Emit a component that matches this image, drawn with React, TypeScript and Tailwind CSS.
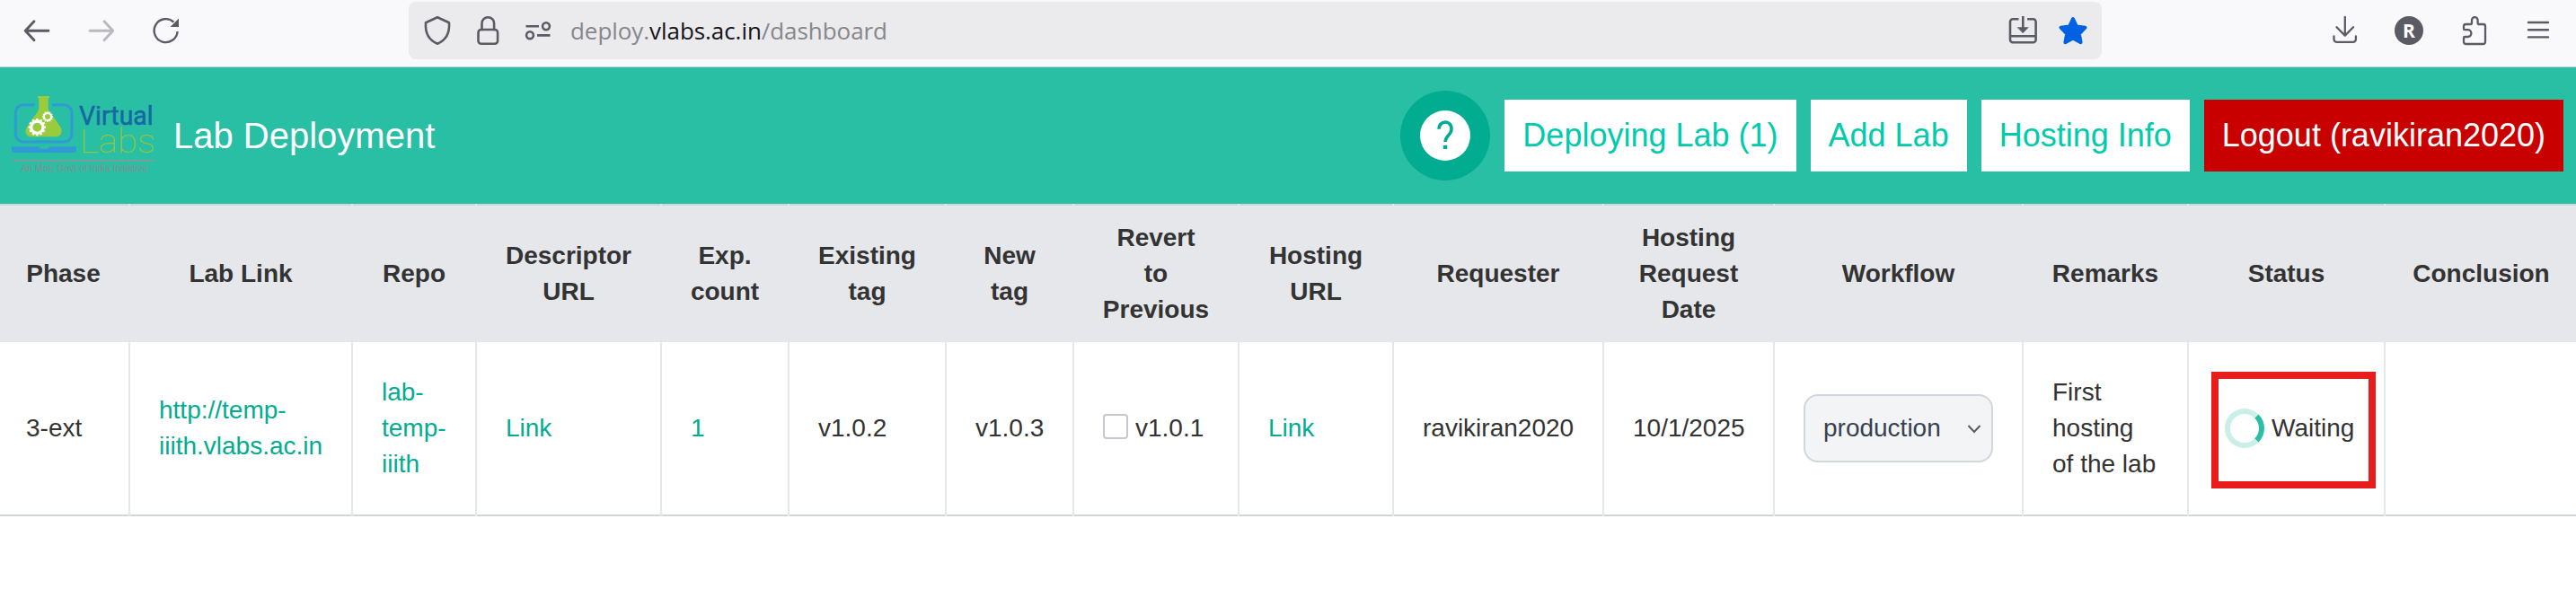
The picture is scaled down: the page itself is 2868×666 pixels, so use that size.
import type { ReactNode } from "react";

function Icon({ children, className = "text-[#5b5b66]" }: { children: ReactNode; className?: string }) {
  return (
    <svg
      viewBox="0 0 32 32"
      className={`size-8 shrink-0 overflow-visible ${className}`}
      fill="none"
      stroke="currentColor"
      strokeWidth="2.6"
      strokeLinecap="round"
      strokeLinejoin="round"
    >
      {children}
    </svg>
  );
}

function Toolbar() {
  return (
    <div className="flex h-[75px] items-start border-b border-[#cfcfd8] bg-[#f9f9fb] pt-0.5">
      <div className="flex h-16 w-[455px] items-center gap-10 pl-[25px]">
        <Icon>
          <path d="M29 16.3H3.5M13 5.8 3.2 16.3 13 26.8" strokeWidth="2.9" />
        </Icon>
        <Icon className="text-[#b9b9c0]">
          <path d="M3 16.3h25.5M19 5.8l9.8 10.5L19 26.8" strokeWidth="2.9" />
        </Icon>
        <Icon>
          <path d="M28.6 17A13 13 0 1 1 24.5 6.6" strokeLinecap="butt" strokeWidth="2.4" />
          <path d="M30 2.6V12H20.6z" fill="currentColor" stroke="none" />
        </Icon>
      </div>
      <div className="flex h-16 w-[1885px] items-center gap-6 rounded-lg bg-[#ebebed] px-4 text-[#55555e]">
        <Icon>
          <path d="M16 1.3 29 7.2c1 14-5.5 20.5-13 23.5C8.5 27.7 2 21.2 3 7.2z" />
        </Icon>
        <Icon>
          <g transform="translate(0.3 0)">
            <rect x="5.2" y="15" width="21.6" height="15.7" rx="3.2" />
            <path d="M9.2 15V8a6.8 6.8 0 0 1 13.6 0v7" />
          </g>
        </Icon>
        <Icon>
          <path d="M2.5 11.2h14.5M15 21.4h14.5" strokeLinecap="butt" />
          <circle cx="25" cy="11.2" r="3.9" />
          <circle cx="7" cy="21.2" r="3.9" />
        </Icon>
        <div className="-ml-1 flex h-9 flex-1 items-center font-['Open_Sans',sans-serif] text-[26px] tracking-[-0.06px] whitespace-pre text-[#86868b]">
          deploy.<span className="text-[#15141a]">vlabs.ac.in</span>/dashboard
        </div>
        <Icon>
          <path
            d="M11.5 3.3H5a3 3 0 0 0-3 3v20a3 3 0 0 0 3 3h22.6a3 3 0 0 0 3-3v-20a3 3 0 0 0-3-3h-6.5M2 22.3h28.5"
            strokeLinecap="butt"
          />
          <path d="M16.3 0v14" strokeLinecap="butt" />
          <path d="M10.3 12.5h12l-6 6.2z" fill="currentColor" strokeWidth="0.5" />
        </Icon>
        <Icon className="text-[#0062e3]">
          <path
            d="M16 3l3.9 8.5 9.6 1.2-6.7 6.9 1.8 9.6L16 24.6l-8.6 4.6 1.8-9.6-6.7-6.9 9.6-1.2z"
            fill="currentColor"
            strokeWidth="4"
          />
        </Icon>
      </div>
      <div className="flex h-16 flex-1 items-center justify-end gap-10 pr-[26px]">
        <Icon className="-mr-px text-[#5b5b66]">
          <path d="M15.8 1v20.5M6.5 12.3l9.3 9.3 9.3-9.3" strokeWidth="2.3" />
          <path d="M3.5 22.5v3.200a3.200 3.200 0 0 0 3.200 3.200h18a3.200 3.200 0 0 0 3.200-3.200v-3.200" strokeWidth="2.3" />
        </Icon>
        <div className="flex size-8 items-center justify-center rounded-full bg-[#5b5b66] font-['Open_Sans',sans-serif] text-[21px] leading-8 font-bold text-white">
          R
        </div>
        <Icon>
          <path
            d="M5 13.5v-2.2a2.3 2.3 0 0 1 2.3-2.3h5.8a.9.9 0 0 0 .9-.9V4.5a3.3 3.3 0 0 1 6.6 0v3.6a.9.9 0 0 0 .9.9h5.2a2.3 2.3 0 0 1 2.3 2.3v17.4a2.3 2.3 0 0 1-2.3 2.3H7.3A2.3 2.3 0 0 1 5 28.7v-4.5a1.2 1.2 0 0 1 1.2-1.2H9.500a3.9 3.9 0 0 0 0-7.8H6.2A1.2 1.2 0 0 1 5 14z"
            strokeWidth="2.3"
          />
        </Icon>
        <Icon>
          <path d="M5 7h22M5 15.2h22M5 23.4h22" strokeWidth="2.4" />
        </Icon>
      </div>
    </div>
  );
}

const TEETH = [0, 30, 60, 90, 120, 150, 180, 210, 240, 270, 300, 330];

function Gear({ cx, cy, r, w, t }: { cx: number; cy: number; r: number; w: number; t: number }) {
  return (
    <g transform={`translate(${cx} ${cy})`} fill="white">
      <circle r={r} fill="none" stroke="white" strokeWidth={w} />
      {TEETH.map((a) => (
        <rect key={a} x={-t / 2} y={-(r + w / 2 + t * 0.6)} width={t} height={t} transform={`rotate(${a})`} />
      ))}
    </g>
  );
}

function Logo() {
  return (
    <svg viewBox="36 45 486 264" className="-mt-1 h-[88px] w-[162px] shrink-0 overflow-visible">
      <path
        d="M116 80H78a26 26 0 0 0-26 26v72a26 26 0 0 0 26 26h136a26 26 0 0 0 26-26v-72a26 26 0 0 0-26-26h-40"
        fill="none"
        stroke="#2f9ad6"
        strokeWidth="9"
      />
      <path d="M39 220h90q1 7 7 7h22q6 0 7-7h90v9q0 11-11 11H50q-11 0-11-11z" fill="#2f9ad6" />
      <path
        d="M126 51h39v7h-4v34c2 10 10 17 16 26l26 38c8 15-2 31-16 31h-82c-16 0-24-16-16-31l26-38c6-9 13-16 15-26V58h-4z"
        fill="#9acb3c"
      />
      <Gear cx={124} cy={155} r={20} w={10} t={7} />
      <Gear cx={159} cy={120} r={12} w={6} t={4.5} />
      <g fontFamily="Roboto, sans-serif">
        <text x="264" y="147" fontSize="90" fontWeight="400" fill="#1667a3" stroke="#1667a3" strokeWidth="1.5" textLength="248" lengthAdjust="spacingAndGlyphs">
          Virtual
        </text>
        <text x="266" y="240" fontSize="112" fontWeight="100" fill="#8ac640" stroke="#8ac640" strokeWidth="0.8" textLength="252" lengthAdjust="spacingAndGlyphs">
          Labs
        </text>
      </g>
      <path d="M40 266.5h475" stroke="#85989a" strokeWidth="5" />
      <text
        x="70"
        y="304"
        fontSize="31"
        fontFamily="Liberation Sans, sans-serif"
        fill="#7d9492"
        stroke="#7d9492"
        strokeWidth="0.6"
        textLength="422"
        lengthAdjust="spacingAndGlyphs"
      >
        An MoE Govt of India Initiative
      </text>
    </svg>
  );
}

function HeaderButton({ children, className = "bg-white text-[#00cbaa]" }: { children: ReactNode; className?: string }) {
  return <button className={`h-20 px-5 text-4xl whitespace-nowrap ${className}`}>{children}</button>;
}

function Header() {
  return (
    <header className="flex h-[152px] items-center bg-[#29bfa5] pr-3.5 pl-3">
      <Logo />
      <h1 className="ml-[19px] text-[40px] leading-none text-white">Lab Deployment</h1>
      <div className="ml-auto flex items-center gap-4">
        <div className="flex size-[100px] items-center justify-center rounded-full bg-[#02ac90]">
          <svg viewBox="0 0 56 56" className="size-14" fill="none">
            <circle cx="28" cy="28" r="28" fill="white" />
            <path
              d="M21.3 20.8a6.9 6.9 0 1 1 13.6.4c0 5.8-6.8 7.2-6.8 13.8"
              stroke="#02ac90"
              strokeWidth="3.6"
            />
            <path d="M25.8 38.7h4.5v4.3h-4.5z" fill="#02ac90" />
          </svg>
        </div>
        <HeaderButton>Deploying Lab (1)</HeaderButton>
        <HeaderButton>Add Lab</HeaderButton>
        <HeaderButton>Hosting Info</HeaderButton>
        <HeaderButton className="bg-[#c90000] text-white">Logout (ravikiran2020)</HeaderButton>
      </div>
    </header>
  );
}

function Th({ children }: { children: ReactNode }) {
  return (
    <th className="h-[154px] border-r-2 border-gray-200 bg-[#e5e7eb] pt-0.5 pr-[30px] pl-[30px] text-center align-middle font-bold shadow-[inset_0_2px_0_#d1d5db] first:pl-7 last:border-r-0 last:pr-[29px]">
      {children}
    </th>
  );
}

function Td({ children }: { children?: ReactNode }) {
  return (
    <td className="h-[194px] border-r-2 border-[#e5e7eb] bg-white pr-[28px] pb-0.5 pl-[32px] align-middle shadow-[inset_0_-2px_0_#d1d5db] first:pl-[29px] last:border-r-0">
      {children}
    </td>
  );
}

function Anchor({ children }: { children: ReactNode }) {
  return <a className="text-[#02ac90]">{children}</a>;
}

function LabTable() {
  return (
    <table className="w-[2868px] table-fixed border-separate border-spacing-0 text-[28px] leading-10 text-[#333333]">
      <colgroup>
        <col className="w-[145px]" />
        <col className="w-[248px]" />
        <col className="w-[138px]" />
        <col className="w-[206px]" />
        <col className="w-[142px]" />
        <col className="w-[175px]" />
        <col className="w-[142px]" />
        <col className="w-[184px]" />
        <col className="w-[172px]" />
        <col className="w-[234px]" />
        <col className="w-[190px]" />
        <col className="w-[277px]" />
        <col className="w-[184px]" />
        <col className="w-[219px]" />
        <col className="w-[212px]" />
      </colgroup>
      <thead>
        <tr>
          <Th>Phase</Th>
          <Th>Lab Link</Th>
          <Th>Repo</Th>
          <Th>Descriptor<br />URL</Th>
          <Th>Exp.<br />count</Th>
          <Th>Existing<br />tag</Th>
          <Th>New<br />tag</Th>
          <Th>Revert<br />to<br />Previous</Th>
          <Th>Hosting<br />URL</Th>
          <Th>Requester</Th>
          <Th>Hosting<br />Request<br />Date</Th>
          <Th>Workflow</Th>
          <Th>Remarks</Th>
          <Th>Status</Th>
          <Th>Conclusion</Th>
        </tr>
      </thead>
      <tbody>
        <tr>
          <Td>3-ext</Td>
          <Td><Anchor>http://temp-<br />iiith.vlabs.ac.in</Anchor></Td>
          <Td><Anchor>lab-<br />temp-<br />iiith</Anchor></Td>
          <Td><Anchor>Link</Anchor></Td>
          <Td><Anchor>1</Anchor></Td>
          <Td>v1.0.2</Td>
          <Td>v1.0.3</Td>
          <Td>
            <label className="flex items-center gap-2 whitespace-nowrap">
              <span className="-mt-1 size-7 shrink-0 rounded border-2 border-[#c7c7d0] bg-white" />
              v1.0.1
            </label>
          </Td>
          <Td><Anchor>Link</Anchor></Td>
          <Td>ravikiran2020</Td>
          <Td>10/1/2025</Td>
          <Td>
            <div className="flex h-[76px] w-[211px] items-center justify-between rounded-2xl border-2 border-gray-300 bg-gray-100 pr-[11px] pl-5 text-[#374151]">
              production
              <svg viewBox="0 0 16 10" className="mt-0.5 h-2.5 w-4" fill="none" stroke="#5b5b66" strokeWidth="2">
                <path d="m1.5 1 6.5 7 6.5-7" />
              </svg>
            </div>
          </Td>
          <Td>First<br />hosting<br />of the lab</Td>
          <Td>
            <div className="relative flex items-center gap-2 pl-2">
              <span className="size-11 shrink-0 rounded-full border-[6px] border-[#c9efe8] border-r-[#29bfa5]" />
              Waiting
              <span className="absolute -top-[41px] -left-[7px] h-[130px] w-[183px] border-8 border-[#e81c1c]" />
            </div>
          </Td>
          <Td />
        </tr>
      </tbody>
    </table>
  );
}

export default function App() {
  return (
    <div className="min-h-[666px] w-[2868px] overflow-hidden bg-white font-['Liberation_Sans',Arial,sans-serif]">
      <Toolbar />
      <Header />
      <LabTable />
    </div>
  );
}
